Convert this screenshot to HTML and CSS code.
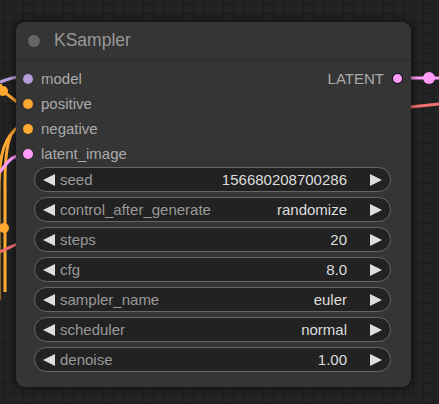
FILE: index.html
```html
<!DOCTYPE html>
<html lang="en">
<head>
    <meta charset="UTF-8">
    <title>KSampler</title>
    <link rel="stylesheet" href="styles.css">
</head>
<body>
    <div class="canvas">
        <!-- links drawn behind the node -->
        <svg class="links" width="439" height="404" viewBox="0 0 439 404">
            <path d="M0,82 C6,80 10,78 17,77" stroke="#b39ddb" stroke-width="3" fill="none"/>
            <path d="M0,84 L3,91 L17,102" stroke="#ffa931" stroke-width="3" fill="none"/>
            <circle cx="3" cy="91" r="5" fill="#ffa931"/>
            <path d="M17,128 C9,132 5,152 5,182 L5,292" stroke="#ffa931" stroke-width="3" fill="none"/>
            <path d="M14,131 C2,142 -1,162 -1,192 L-1,300" stroke="#ffa931" stroke-width="3" fill="none"/>
            <circle cx="4" cy="228" r="5" fill="#ffa931"/>
            <path d="M0,172 C6,164 10,158 17,156" stroke="#ff9cf9" stroke-width="3" fill="none"/>
            <path d="M0,252 L17,244" stroke="#f07070" stroke-width="3" fill="none"/>
            <path d="M410,78 L439,78" stroke="#ff9cf9" stroke-width="3" fill="none"/>
            <circle cx="429" cy="78" r="6" fill="#ff9cf9"/>
            <path d="M410,107 L439,104" stroke="#f07070" stroke-width="3" fill="none"/>
        </svg>

        <div class="node">
            <div class="node-title">
                <span class="title-dot"></span>
                <span class="title-text">KSampler</span>
            </div>
            <div class="slots">
                <div class="inputs">
                    <div class="slot"><span class="dot model"></span>model</div>
                    <div class="slot"><span class="dot cond"></span>positive</div>
                    <div class="slot"><span class="dot cond"></span>negative</div>
                    <div class="slot"><span class="dot latent"></span>latent_image</div>
                </div>
                <div class="outputs">
                    <div class="slot out">LATENT<span class="dot latent ring"></span></div>
                </div>
            </div>
            <div class="widgets">
                <div class="widget"><span class="arrow left"></span><span class="label">seed</span><span class="value">156680208700286</span><span class="arrow right"></span></div>
                <div class="widget"><span class="arrow left"></span><span class="label">control_after_generate</span><span class="value">randomize</span><span class="arrow right"></span></div>
                <div class="widget"><span class="arrow left"></span><span class="label">steps</span><span class="value">20</span><span class="arrow right"></span></div>
                <div class="widget"><span class="arrow left"></span><span class="label">cfg</span><span class="value">8.0</span><span class="arrow right"></span></div>
                <div class="widget"><span class="arrow left"></span><span class="label">sampler_name</span><span class="value">euler</span><span class="arrow right"></span></div>
                <div class="widget"><span class="arrow left"></span><span class="label">scheduler</span><span class="value">normal</span><span class="arrow right"></span></div>
                <div class="widget"><span class="arrow left"></span><span class="label">denoise</span><span class="value">1.00</span><span class="arrow right"></span></div>
            </div>
        </div>
    </div>
</body>
</html>
```

FILE: styles.css
```css
* {
    box-sizing: border-box;
    font-family: 'Liberation Sans', Arial, sans-serif;
}

body {
    margin: 0;
    padding: 0;
    width: 439px;
    height: 404px;
    overflow: hidden;
    background-color: #232323;
    background-image:
        linear-gradient(to right, #1c1c1c 1px, transparent 1px),
        linear-gradient(to bottom, #1c1c1c 1px, transparent 1px);
    background-size: 10px 10px;
    background-position: 3px 3px;
}

.canvas {
    position: relative;
    width: 439px;
    height: 404px;
    padding: 22px 0 0 16px;
}

.links {
    position: absolute;
    left: 0;
    top: 0;
}

.node {
    position: relative;
    width: 395px;
    height: 365px;
    background: #353535;
    border-radius: 9px;
    box-shadow: 0 0 6px 2px rgba(0, 0, 0, 0.45);
}

.node-title {
    height: 38px;
    display: flex;
    align-items: center;
    padding-left: 12px;
    border-bottom: 1px solid #2b2b2b;
}

.title-dot {
    width: 12px;
    height: 12px;
    border-radius: 50%;
    background: #666;
    margin-right: 14px;
}

.title-text {
    color: #999;
    font-size: 17.5px;
}

.slots {
    display: flex;
    justify-content: space-between;
    padding-top: 6px;
}

.slot {
    height: 25px;
    display: flex;
    align-items: center;
    color: #aaa;
    font-size: 15px;
    padding-left: 7px;
}

.slot .dot {
    width: 10px;
    height: 10px;
    border-radius: 50%;
    margin-right: 8px;
}

.slot.out {
    padding-left: 0;
    padding-right: 8px;
}

.slot.out .dot {
    margin-right: 0;
    margin-left: 8px;
}

.dot.model {
    background: #b39ddb;
}

.dot.cond {
    background: #ffa931;
}

.dot.latent {
    background: #ff9cf9;
}

.dot.ring {
    width: 11px;
    height: 11px;
    border: 1px solid #000;
}

.widgets {
    display: flex;
    flex-direction: column;
    gap: 5px;
    padding: 1px 20px 0 18px;
}

.widget {
    height: 25px;
    display: flex;
    align-items: center;
    background: #222;
    border: 1px solid #666;
    border-radius: 13px;
    padding: 0 8px 0 8px;
    font-size: 15px;
}

.arrow {
    width: 0;
    height: 0;
    border-top: 6px solid transparent;
    border-bottom: 6px solid transparent;
}

.arrow.left {
    border-right: 12px solid #ddd;
    margin-right: 5px;
}

.arrow.right {
    border-left: 12px solid #ddd;
    margin-left: 23px;
}

.label {
    color: #999;
    flex: 1;
}

.value {
    color: #ddd;
}
```
